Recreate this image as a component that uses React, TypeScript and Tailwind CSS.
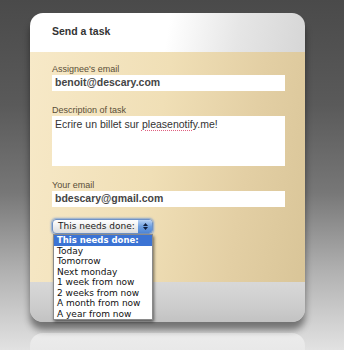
import React from 'react';

const options = [
  'This needs done:',
  'Today',
  'Tomorrow',
  'Next monday',
  '1 week from now',
  '2 weeks from now',
  'A month from now',
  'A year from now',
];

const App: React.FC = () => {
  return (
    <div
      className="w-[344px] h-[350px] overflow-hidden pl-[30px] pt-[13px] bg-[linear-gradient(180deg,#4a4a4a_0%,#5a5a5a_30%,#777777_55%,#b2b2b2_78%,#e2e2e2_100%)]"
      style={{ fontFamily: '"Liberation Sans", Arial, sans-serif' }}
    >
      <div className="relative w-[275px] h-[309px] rounded-[13px] flex flex-col shadow-[0_8px_7px_rgba(0,0,0,0.45)]">
        <div className="h-[39px] shrink-0 rounded-t-[13px] bg-[linear-gradient(100deg,#ffffff_0%,#ffffff_50%,#e6e6e6_75%,#d6d6d6_100%)] pl-[22px] flex items-center">
          <span className="text-[10.5px] font-bold text-[#333] pb-[2px]">Send a task</span>
        </div>
        <div className="h-[230px] shrink-0 bg-[linear-gradient(100deg,#f7e9c8_0%,#f0dfb6_45%,#e3cfa4_75%,#d9c598_100%)] pl-[22px] pr-[20px] pt-[12px] flex flex-col">
          <div className="flex flex-col">
            <span className="text-[9px] leading-[11px] text-[#5a4e38]">Assignee's email</span>
            <div className="h-[16px] bg-white flex items-center pl-[3px] text-[10.5px] font-bold text-[#454545]">
              benoit@descary.com
            </div>
          </div>
          <div className="flex flex-col mt-[14px]">
            <span className="text-[9px] leading-[11px] text-[#5a4e38]">Description of task</span>
            <div className="h-[50px] bg-white pl-[3px] pt-[2px] text-[10.5px] leading-[13px] text-[#333]">
              Ecrire un billet sur{' '}
              <span className="underline decoration-dotted decoration-[#e06080] underline-offset-2">pleasenotify</span>.me!
            </div>
          </div>
          <div className="flex flex-col mt-[14px]">
            <span className="text-[9px] leading-[11px] text-[#5a4e38]">Your email</span>
            <div className="h-[16px] bg-white flex items-center pl-[3px] text-[10.5px] font-bold text-[#454545]">
              bdescary@gmail.com
            </div>
          </div>
          <div className="relative mt-[12px] w-[101px]" style={{ fontFamily: '"DejaVu Sans", Verdana, sans-serif' }}>
            <div className="h-[15px] rounded-[4px] border border-[#6f93c8] shadow-[0_0_2px_1px_rgba(90,140,220,0.7)] bg-[linear-gradient(180deg,#ffffff_0%,#eeeeee_50%,#dcdcdc_100%)] flex items-center overflow-hidden">
              <span className="flex-1 pl-[5px] text-[9px] text-[#1a1a1a]">This needs done:</span>
              <span className="w-[14px] h-full bg-[linear-gradient(180deg,#b9d3f5_0%,#6e9fe0_50%,#4f86d6_100%)] flex flex-col items-center justify-center gap-[1px]">
                <svg width="5" height="3" viewBox="0 0 5 3"><path d="M0 3 L2.5 0 L5 3 Z" fill="#102040" /></svg>
                <svg width="5" height="3" viewBox="0 0 5 3"><path d="M0 0 L2.5 3 L5 0 Z" fill="#102040" /></svg>
              </span>
            </div>
            <div className="absolute left-[1px] top-[15px] w-[100px] bg-white border border-[#8a8a8a] shadow-[1px_2px_3px_rgba(0,0,0,0.55)] z-10">
              {options.map((o, i) => (
                <div
                  key={o}
                  className={
                    i === 0
                      ? 'h-[10.5px] leading-[10.5px] pl-[3px] text-[8.5px] font-bold text-white bg-[#3b73d4]'
                      : 'h-[10.5px] leading-[10.5px] pl-[3px] text-[9px] text-[#111]'
                  }
                >
                  {o}
                </div>
              ))}
            </div>
          </div>
        </div>
        <div className="flex-1 rounded-b-[13px] bg-[linear-gradient(180deg,#d8d8d8_0%,#cdcdcd_60%,#c2c2c2_100%)]" />
      </div>
      <div className="mt-[11px] w-[275px] h-[30px] rounded-t-[13px] bg-[linear-gradient(180deg,#ececec_0%,#e6e6e6_100%)]" />
    </div>
  );
};

export default App;
